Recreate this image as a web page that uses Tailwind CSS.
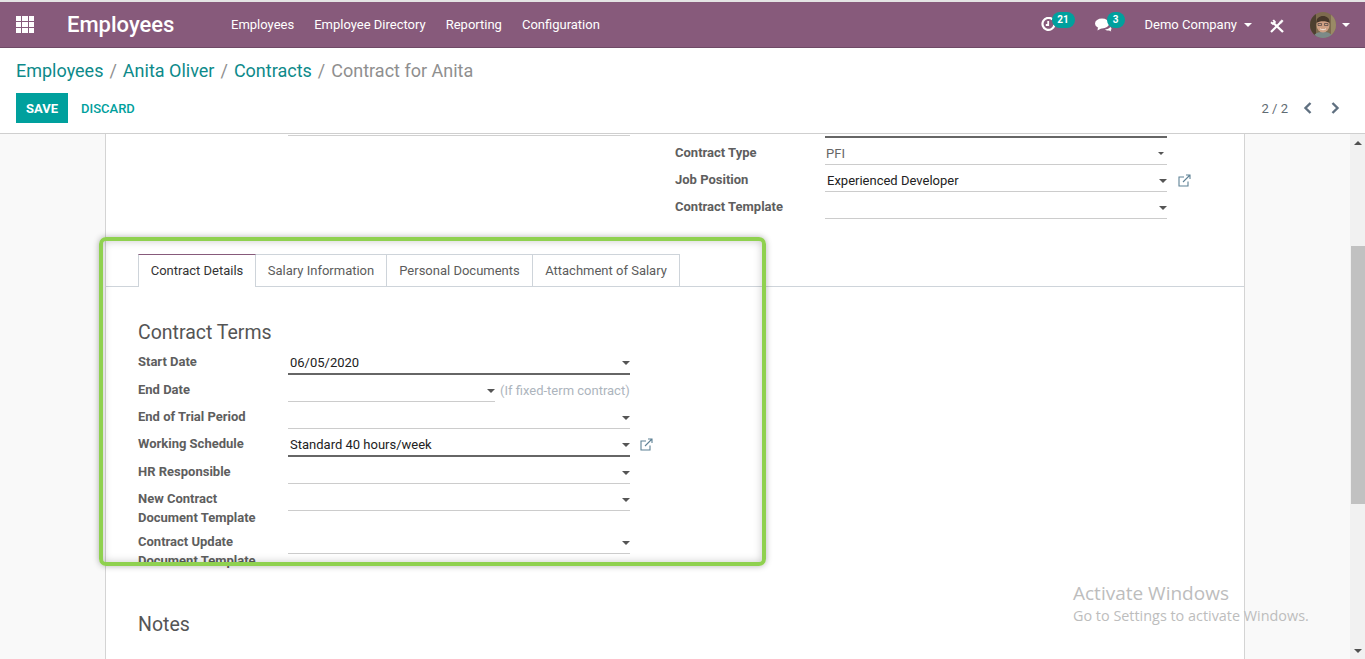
<!DOCTYPE html>
<html lang="en">
<head>
    <meta charset="UTF-8">
    <title>Contract for Anita - Odoo</title>
    <script src="https://cdn.jsdelivr.net/npm/@tailwindcss/browser@4"></script>
</head>
<body class="font-['Roboto',sans-serif] text-[13px] text-[#4c4c4c] bg-white">
<div class="relative w-[1365px] h-[659px] overflow-hidden flex flex-col">

    <!-- top nav -->
    <div class="h-[2px] bg-[#e4e4e4]"></div>
    <header class="h-[46px] bg-[#875a7b] border-b border-[#6f4a66] flex items-center text-white shrink-0">
        <div class="ml-4 w-[18px] grid grid-cols-3 gap-px">
            <i class="h-[5px] bg-white"></i><i class="h-[5px] bg-white"></i><i class="h-[5px] bg-white"></i>
            <i class="h-[5px] bg-white"></i><i class="h-[5px] bg-white"></i><i class="h-[5px] bg-white"></i>
            <i class="h-[5px] bg-white"></i><i class="h-[5px] bg-white"></i><i class="h-[5px] bg-white"></i>
        </div>
        <div class="ml-[33px] w-[164px] text-[22px] font-medium">Employees</div>
        <nav class="flex gap-5 text-[13px]">
            <a>Employees</a>
            <a>Employee Directory</a>
            <a>Reporting</a>
            <a>Configuration</a>
        </nav>
        <div class="ml-auto flex items-center">
            <div class="relative w-[52px] h-[30px]">
                <svg class="absolute left-[-2px] top-[7px]" width="15" height="15" viewBox="0 0 15 15" fill="none" stroke="#fff" stroke-width="2.200"><path d="M11.500 2.400A6 6 0 1 0 13.400 8"/><path d="M7.200 4v4H4.800" stroke-width="1.800"/></svg>
                <span class="absolute left-[9px] top-[2px] w-[23px] h-4 rounded-full bg-[#00a09d] text-[10px] font-bold leading-4 text-center">21</span>
            </div>
            <div class="relative w-[50px] h-[30px]">
                <svg class="absolute left-0 top-[7px]" width="17" height="15" viewBox="0 0 17 15" fill="#fff"><ellipse cx="7" cy="6.500" rx="7" ry="5"/><path d="M3 10 2.500 13.500 7 11z"/><path d="M10 12.300c2.300 0 4.200-.9 5.300-2.300.8.500 1.200 1 1.200 1.700 0 .6-.3 1.100-.8 1.400l.5 1.400-2.200-1c-1.600.3-3 0-4-1.200z"/></svg>
                <span class="absolute left-[12px] top-[2px] w-[18px] h-4 rounded-full bg-[#00a09d] text-[10px] font-bold leading-4 text-center">3</span>
            </div>
            <span class="text-[13px]">Demo Company</span>
            <i class="ml-[7px] border-x-[4px] border-t-[4px] border-x-transparent border-t-white"></i>
            <svg class="ml-[18px] mt-[2px]" width="14" height="14" viewBox="0 0 14 14" fill="none" stroke="#fff"><path d="M4 4.500 13 13" stroke-width="2.400"/><path d="M1 3.200 3 4.800 4.800 3 3.200 1" stroke-width="2"/><path d="M1 13 10 4" stroke-width="2.200"/><path d="M9.200 3.200 12 .8 13.200 2 10.800 4.800z" fill="#fff" stroke-width=".6"/></svg>
            <svg class="ml-[26px]" width="26" height="26" viewBox="0 0 26 26">
                <clipPath id="av"><circle cx="13" cy="13" r="13"/></clipPath>
                <g clip-path="url(#av)">
                    <rect width="26" height="26" fill="#7d6a4e"/>
                    <rect x="0" y="0" width="6" height="26" fill="#4e4030"/>
                    <rect x="21" y="0" width="5" height="26" fill="#9a8a66"/>
                    <path d="M3 26c1-5 5-6 10-6s9 1 10 6z" fill="#7c8a88"/>
                    <ellipse cx="13" cy="13" rx="6.500" ry="7.500" fill="#cfa084"/>
                    <path d="M6.500 11c-.5-5 3-7 6.500-7s7 2 6.500 7c-3-2.500-10-2.500-13 0z" fill="#463629"/>
                    <path d="M8 11.500h3.500v2H8zM14.500 11.500H18v2h-3.500z" fill="none" stroke="#4a4442" stroke-width=".7"/>
                    <path d="M10 16.800c2 1.200 4 1.200 6 0" stroke="#f1e6dc" fill="none"/>
                </g>
            </svg>
            <i class="ml-[6px] mr-[15px] border-x-[4px] border-t-[4px] border-x-transparent border-t-white"></i>
        </div>
    </header>

    <!-- control panel -->
    <div class="h-[86px] shrink-0 bg-white border-b border-[#cfcfcf] px-4">
        <div class="pt-[11px] h-[45px] text-[18px] leading-[24px] text-[#8f8f8f] flex gap-[6px]">
            <a class="text-[#0d8a8a]">Employees</a><span>/</span>
            <a class="text-[#0d8a8a]">Anita Oliver</a><span>/</span>
            <a class="text-[#0d8a8a]">Contracts</a><span>/</span>
            <span>Contract for Anita</span>
        </div>
        <div class="flex items-center">
            <button class="w-[52px] h-[30px] pt-px bg-[#00a09d] text-white text-[13px] font-bold">SAVE</button>
            <button class="ml-[13px] pt-px text-[#00a09d] text-[13px] font-medium">DISCARD</button>
            <span class="ml-auto pt-px text-[#5f6b73] text-[13px]">2 / 2</span>
            <svg class="ml-[15px]" width="9" height="12" viewBox="0 0 9 12" fill="none" stroke="#5f7080" stroke-width="2.400"><path d="M7.500 1 2.500 6l5 5"/></svg>
            <svg class="ml-[19px] mr-[9px]" width="9" height="12" viewBox="0 0 9 12" fill="none" stroke="#5f7080" stroke-width="2.400"><path d="M1.500 1l5 5-5 5"/></svg>
        </div>
    </div>

    <!-- scrolling area -->
    <div class="flex-1 flex min-h-0">
        <div class="flex-1 bg-[#f9f9f9] overflow-hidden">
            <div class="ml-[105px] w-[1140px] h-full bg-white border-x border-[#d4d4d4]">

                <div class="h-[120px] flex">
                    <div class="ml-[182px] w-[342px] h-[2px] border-b border-[#d0d0d0]"></div>
                    <div class="ml-[45px] mt-[2px]">
                        <div class="ml-[150px] w-[342px] h-[2px] mb-[5px] bg-[#666]"></div>
                        <div class="flex pb-[5px]">
                            <label class="w-[150px] font-bold leading-[19px] text-[#5e5e5e]">Contract Type</label>
                            <div class="w-[342px] h-[22px] border-b border-[#ccc] flex items-center justify-between pl-px pr-[3px] text-[#666]">PFI<i class="border-x-[3px] border-t-[3px] border-x-transparent border-t-[#555]"></i></div>
                        </div>
                        <div class="flex pb-[5px]">
                            <label class="w-[150px] font-bold leading-[19px] text-[#5e5e5e]">Job Position</label>
                            <div class="w-[342px] h-[22px] border-b border-[#ccc] flex items-center justify-between pl-[2px] pr-[0px] text-[#222]">Experienced Developer<i class="border-x-[4px] border-t-[4px] border-x-transparent border-t-[#555]"></i></div>
                            <svg class="ml-[11px] mt-[4px]" width="13" height="13" viewBox="0 0 13 13" fill="none" stroke="#5f8296" stroke-width="1.100"><path d="M10 7.500V12H1V3h5"/><path d="M5 8 12 1M8 1h4v4"/></svg>
                        </div>
                        <div class="flex pb-[5px]">
                            <label class="w-[150px] font-bold leading-[19px] text-[#5e5e5e]">Contract Template</label>
                            <div class="w-[342px] h-[22px] border-b border-[#ccc] flex items-center justify-end"><i class="border-x-[4px] border-t-[4px] border-x-transparent border-t-[#555]"></i></div>
                        </div>
                    </div>
                </div>

                <!-- tabs -->
                <div class="h-[33px] pl-[32px] flex border-b border-[#ced4da] text-[13px]">
                    <div class="w-[118px] h-[33px] flex items-center justify-center bg-white border-x border-[#ced4da] border-t border-t-[#875a7b] text-[#333]">Contract Details</div>
                    <div class="w-[131px] h-[32px] flex items-center justify-center border-r border-t border-[#ced4da] text-[#5c5c5c]">Salary Information</div>
                    <div class="w-[146px] h-[32px] flex items-center justify-center border-r border-t border-[#ced4da] text-[#5c5c5c]">Personal Documents</div>
                    <div class="w-[147px] h-[32px] flex items-center justify-center border-r border-t border-[#ced4da] text-[#5c5c5c]">Attachment of Salary</div>
                </div>

                <div class="pl-[32px]">
                    <h2 class="pt-[32px] h-[66px] text-[19.500px] leading-[28px] text-[#555]">Contract Terms</h2>

                    <div class="flex pb-[5px]">
                        <label class="-mt-px w-[150px] font-bold leading-[19px] text-[#5e5e5e]">Start Date</label>
                        <div class="w-[342px] h-[22px] border-b-2 border-[#666] flex items-center justify-between pl-[2px] pr-[0px] text-[#222]">06/05/2020<i class="border-x-[4px] border-t-[4px] border-x-transparent border-t-[#555]"></i></div>
                    </div>
                    <div class="flex pb-[5px]">
                        <label class="w-[150px] font-bold leading-[19px] text-[#5e5e5e]">End Date</label>
                        <div class="w-[207px] h-[22px] border-b border-[#ccc] flex items-center justify-end"><i class="border-x-[4px] border-t-[4px] border-x-transparent border-t-[#555]"></i></div>
                        <span class="ml-[5px] mt-px text-[#adb5bd] leading-[19px]">(If fixed-term contract)</span>
                    </div>
                    <div class="flex pb-[5px]">
                        <label class="w-[150px] font-bold leading-[19px] text-[#5e5e5e]">End of Trial Period</label>
                        <div class="w-[342px] h-[22px] border-b border-[#ccc] flex items-center justify-end"><i class="border-x-[4px] border-t-[4px] border-x-transparent border-t-[#555]"></i></div>
                    </div>
                    <div class="flex pb-[5px]">
                        <label class="w-[150px] font-bold leading-[19px] text-[#5e5e5e]">Working Schedule</label>
                        <div class="mt-px w-[342px] h-[22px] border-b-2 border-[#666] flex items-center justify-between pl-[2px] pr-[0px] text-[#222]">Standard 40 hours/week<i class="border-x-[4px] border-t-[4px] border-x-transparent border-t-[#555]"></i></div>
                        <svg class="ml-[10px] mt-[4px]" width="13" height="13" viewBox="0 0 13 13" fill="none" stroke="#5f8296" stroke-width="1.100"><path d="M10 7.500V12H1V3h5"/><path d="M5 8 12 1M8 1h4v4"/></svg>
                    </div>
                    <div class="flex pb-[5px]">
                        <label class="w-[150px] font-bold leading-[19px] text-[#5e5e5e]">HR Responsible</label>
                        <div class="w-[342px] h-[22px] border-b border-[#ccc] flex items-center justify-end"><i class="border-x-[4px] border-t-[4px] border-x-transparent border-t-[#555]"></i></div>
                    </div>
                    <div class="flex pb-[5px]">
                        <label class="w-[150px] font-bold leading-[19px] text-[#5e5e5e]">New Contract<br>Document Template</label>
                        <div class="w-[342px] h-[22px] border-b border-[#ccc] flex items-center justify-end"><i class="border-x-[4px] border-t-[4px] border-x-transparent border-t-[#555]"></i></div>
                    </div>
                    <div class="flex pb-[5px]">
                        <label class="w-[150px] font-bold leading-[19px] text-[#5e5e5e]">Contract Update<br>Document Template</label>
                        <div class="w-[342px] h-[22px] border-b border-[#ccc] flex items-center justify-end"><i class="border-x-[4px] border-t-[4px] border-x-transparent border-t-[#555]"></i></div>
                    </div>

                    <h2 class="mt-[36px] text-[19.500px] leading-[28px] text-[#555]">Notes</h2>
                </div>
            </div>
        </div>

        <!-- scrollbar -->
        <div class="w-[15px] shrink-0 bg-[#f1f1f1] relative">
            <i class="absolute left-[4px] top-[7px] border-x-[4px] border-b-[4px] border-x-transparent border-b-[#505050]"></i>
            <div class="absolute left-[1px] right-0 top-[112px] h-[258px] bg-[#c1c1c1]"></div>
            <i class="absolute left-[4px] bottom-[6px] border-x-[4px] border-t-[4px] border-x-transparent border-t-[#505050]"></i>
        </div>
    </div>

    <!-- green annotation box -->
    <div class="absolute left-[99px] top-[237px] w-[667px] h-[329px] rounded-[7px] border-[4px] border-[#8fd14f] shadow-[0_0_6px_rgba(0,0,0,0.3),inset_0_0_8px_rgba(0,0,0,0.22)]"></div>

    <!-- windows watermark -->
    <div class="absolute left-[1073px] top-[581px] font-['Open_Sans',sans-serif] text-[#bdbdbd] pointer-events-none">
        <div class="text-[19px] leading-[25px]">Activate Windows</div>
        <div class="text-[14.400px] leading-[20px]">Go to Settings to activate Windows.</div>
    </div>
</div>
</body>
</html>
